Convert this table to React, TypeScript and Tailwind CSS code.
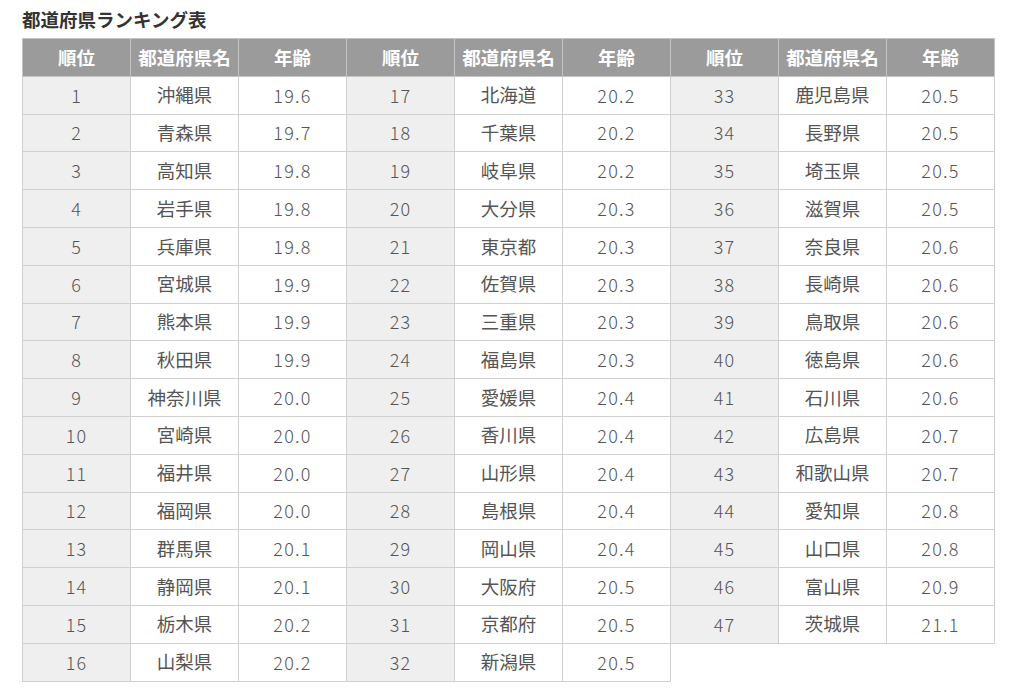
const data: [number, string, string][] = [
  [1, "沖縄県", "19.6"],
  [2, "青森県", "19.7"],
  [3, "高知県", "19.8"],
  [4, "岩手県", "19.8"],
  [5, "兵庫県", "19.8"],
  [6, "宮城県", "19.9"],
  [7, "熊本県", "19.9"],
  [8, "秋田県", "19.9"],
  [9, "神奈川県", "20.0"],
  [10, "宮崎県", "20.0"],
  [11, "福井県", "20.0"],
  [12, "福岡県", "20.0"],
  [13, "群馬県", "20.1"],
  [14, "静岡県", "20.1"],
  [15, "栃木県", "20.2"],
  [16, "山梨県", "20.2"],
  [17, "北海道", "20.2"],
  [18, "千葉県", "20.2"],
  [19, "岐阜県", "20.2"],
  [20, "大分県", "20.3"],
  [21, "東京都", "20.3"],
  [22, "佐賀県", "20.3"],
  [23, "三重県", "20.3"],
  [24, "福島県", "20.3"],
  [25, "愛媛県", "20.4"],
  [26, "香川県", "20.4"],
  [27, "山形県", "20.4"],
  [28, "島根県", "20.4"],
  [29, "岡山県", "20.4"],
  [30, "大阪府", "20.5"],
  [31, "京都府", "20.5"],
  [32, "新潟県", "20.5"],
  [33, "鹿児島県", "20.5"],
  [34, "長野県", "20.5"],
  [35, "埼玉県", "20.5"],
  [36, "滋賀県", "20.5"],
  [37, "奈良県", "20.6"],
  [38, "長崎県", "20.6"],
  [39, "鳥取県", "20.6"],
  [40, "徳島県", "20.6"],
  [41, "石川県", "20.6"],
  [42, "広島県", "20.7"],
  [43, "和歌山県", "20.7"],
  [44, "愛知県", "20.8"],
  [45, "山口県", "20.8"],
  [46, "富山県", "20.9"],
  [47, "茨城県", "21.1"],
];

// 16 rows per column group, laid side by side
const rows = Array.from({ length: 16 }, (_, i) => [data[i], data[i + 16], data[i + 32]]);

const headers = ["順位", "都道府県名", "年齢"];

export default function App() {
  return (
    <div
      className="min-h-[700px] w-[1024px] bg-white px-[22px] pt-[9px] text-[#555]"
      style={{ fontFamily: '"Noto Sans CJK JP", "Noto Sans", sans-serif' }}
    >
      <h2 className="text-[18.5px] leading-[20px] font-bold text-[#333] mb-[9px]">
        都道府県ランキング表
      </h2>
      <table className="table-fixed border-collapse w-[972px]">
        <thead>
          <tr className="h-[37.8px]">
            {[0, 1, 2].map((g) =>
              headers.map((h) => (
                <th
                  key={`${g}-${h}`}
                  className="w-[108px] p-0 bg-[#9b9b9b] border border-[#c4c4c4] text-white font-bold text-[18.5px] leading-none text-center"
                >
                  {h}
                </th>
              ))
            )}
          </tr>
        </thead>
        <tbody>
          {rows.map((r, i) => (
            <tr key={i} className="h-[37.8px]">
              {r.map((cell, g) =>
                cell ? (
                  [
                    <td
                      key={`${g}-r`}
                      className="p-0 bg-[#efefef] border border-[#d0d0d0] text-center text-[18px] tracking-[1px] font-light"
                    >
                      {cell[0]}
                    </td>,
                    <td
                      key={`${g}-p`}
                      className="p-0 bg-white border border-[#d0d0d0] text-center text-[18.5px]"
                    >
                      {cell[1]}
                    </td>,
                    <td
                      key={`${g}-a`}
                      className="p-0 bg-white border border-[#d0d0d0] text-center text-[18px] tracking-[1.3px] font-light"
                    >
                      {cell[2]}
                    </td>,
                  ]
                ) : (
                  <td key={`${g}-e`} colSpan={3} className="p-0 border-none" />
                )
              )}
            </tr>
          ))}
        </tbody>
      </table>
    </div>
  );
}
